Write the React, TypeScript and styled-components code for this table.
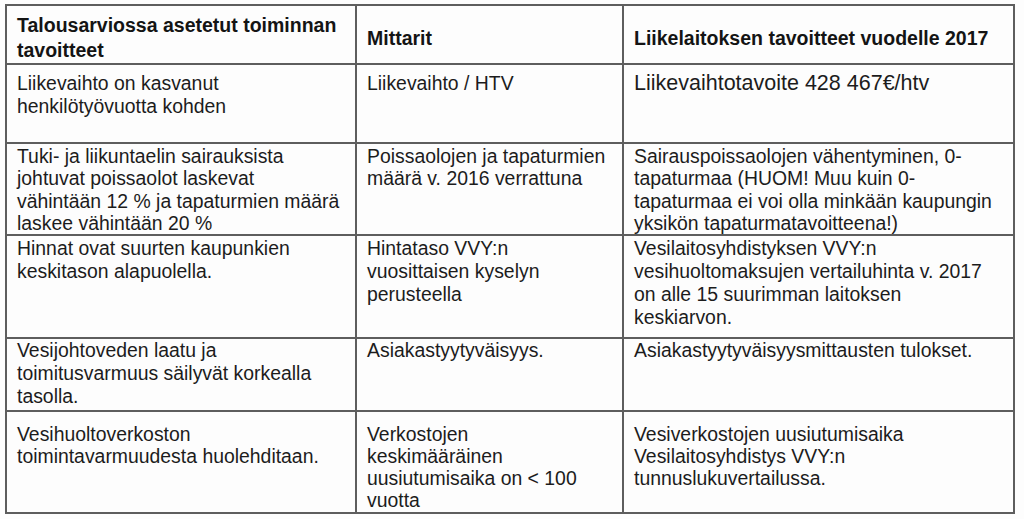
import styled, { createGlobalStyle } from "styled-components";

const GlobalStyle = createGlobalStyle`
  html, body {
    margin: 0;
    padding: 0;
    background: #ffffff;
  }
  body {
    font-family: "Liberation Sans", Arial, Helvetica, sans-serif;
    color: #161616;
  }
`;

const Page = styled.div`
  width: 1024px;
  height: 519px;
  padding: 4px 0 0 5px;
  box-sizing: border-box;
  background: #fdfdfd;
  overflow: hidden;
`;

const Table = styled.table`
  border-collapse: collapse;
  table-layout: fixed;
  width: 1008px;
  border: 2px solid #5e5e5e;
`;

const Col = styled.col<{ w: number }>`
  width: ${(p) => p.w}px;
`;

const Row = styled.tr<{ h: number }>`
  height: ${(p) => p.h}px;
`;

const HeadCell = styled.th`
  border: 2px solid #5e5e5e;
  padding: 7px 8px 0 10px;
  text-align: left;
  vertical-align: middle;
  font-size: 19.5px;
  font-weight: bold;
  line-height: 25px;
  color: #141414;
  overflow: hidden;
`;

const Cell = styled.td<{ top: number; lh: number; big?: boolean }>`
  border: 2px solid #5e5e5e;
  padding: ${(p) => p.top}px 6px 0 10px;
  vertical-align: top;
  font-size: ${(p) => (p.big ? 21.5 : 19.4)}px;
  line-height: ${(p) => p.lh}px;
  color: #1c1c1c;
  white-space: nowrap;
  overflow: hidden;
`;

type RowData = {
  h: number;
  top: number;
  lh: number;
  cells: string[][];
  bigLast?: boolean;
};

const rows: RowData[] = [
  {
    h: 79,
    top: 7,
    lh: 23,
    bigLast: true,
    cells: [
      ["Liikevaihto on kasvanut", "henkilötyövuotta kohden"],
      ["Liikevaihto / HTV"],
      ["Liikevaihtotavoite 428 467€/htv"],
    ],
  },
  {
    h: 90,
    top: 1,
    lh: 22.3,
    cells: [
      [
        "Tuki- ja liikuntaelin sairauksista",
        "johtuvat poissaolot laskevat",
        "vähintään 12 % ja tapaturmien määrä",
        "laskee vähintään 20 %",
      ],
      ["Poissaolojen ja tapaturmien", "määrä v. 2016 verrattuna"],
      [
        "Sairauspoissaolojen vähentyminen, 0-",
        "tapaturmaa (HUOM! Muu kuin 0-",
        "tapaturmaa ei voi olla minkään kaupungin",
        "yksikön tapaturmatavoitteena!)",
      ],
    ],
  },
  {
    h: 103,
    top: 1,
    lh: 23,
    cells: [
      ["Hinnat ovat suurten kaupunkien", "keskitason alapuolella."],
      ["Hintataso VVY:n", "vuosittaisen kyselyn", "perusteella"],
      [
        "Vesilaitosyhdistyksen VVY:n",
        "vesihuoltomaksujen vertailuhinta v. 2017",
        "on alle 15 suurimman laitoksen",
        "keskiarvon.",
      ],
    ],
  },
  {
    h: 73,
    top: 0,
    lh: 23,
    cells: [
      ["Vesijohtoveden laatu ja", "toimitusvarmuus säilyvät korkealla", "tasolla."],
      ["Asiakastyytyväisyys."],
      ["Asiakastyytyväisyysmittausten tulokset."],
    ],
  },
  {
    h: 102,
    top: 11,
    lh: 22,
    cells: [
      ["Vesihuoltoverkoston", "toimintavarmuudesta huolehditaan."],
      ["Verkostojen", "keskimääräinen", "uusiutumisaika on < 100", "vuotta"],
      ["Vesiverkostojen uusiutumisaika", "Vesilaitosyhdistys VVY:n", "tunnuslukuvertailussa."],
    ],
  },
];

function Lines({ lines }: { lines: string[] }) {
  return (
    <>
      {lines.map((l, i) => (
        <span key={i}>
          {l}
          {i < lines.length - 1 && <br />}
        </span>
      ))}
    </>
  );
}

export default function App() {
  return (
    <>
      <GlobalStyle />
      <Page>
        <Table>
          <colgroup>
            <Col w={350} />
            <Col w={267} />
            <Col w={391} />
          </colgroup>
          <thead>
            <Row h={59}>
              <HeadCell>
                Talousarviossa asetetut toiminnan
                <br />
                tavoitteet
              </HeadCell>
              <HeadCell>Mittarit</HeadCell>
              <HeadCell>Liikelaitoksen tavoitteet vuodelle 2017</HeadCell>
            </Row>
          </thead>
          <tbody>
            {rows.map((r, i) => (
              <Row h={r.h} key={i}>
                {r.cells.map((c, j) => (
                  <Cell key={j} top={r.top} lh={r.lh} big={r.bigLast && j === 2}>
                    <Lines lines={c} />
                  </Cell>
                ))}
              </Row>
            ))}
          </tbody>
        </Table>
      </Page>
    </>
  );
}
